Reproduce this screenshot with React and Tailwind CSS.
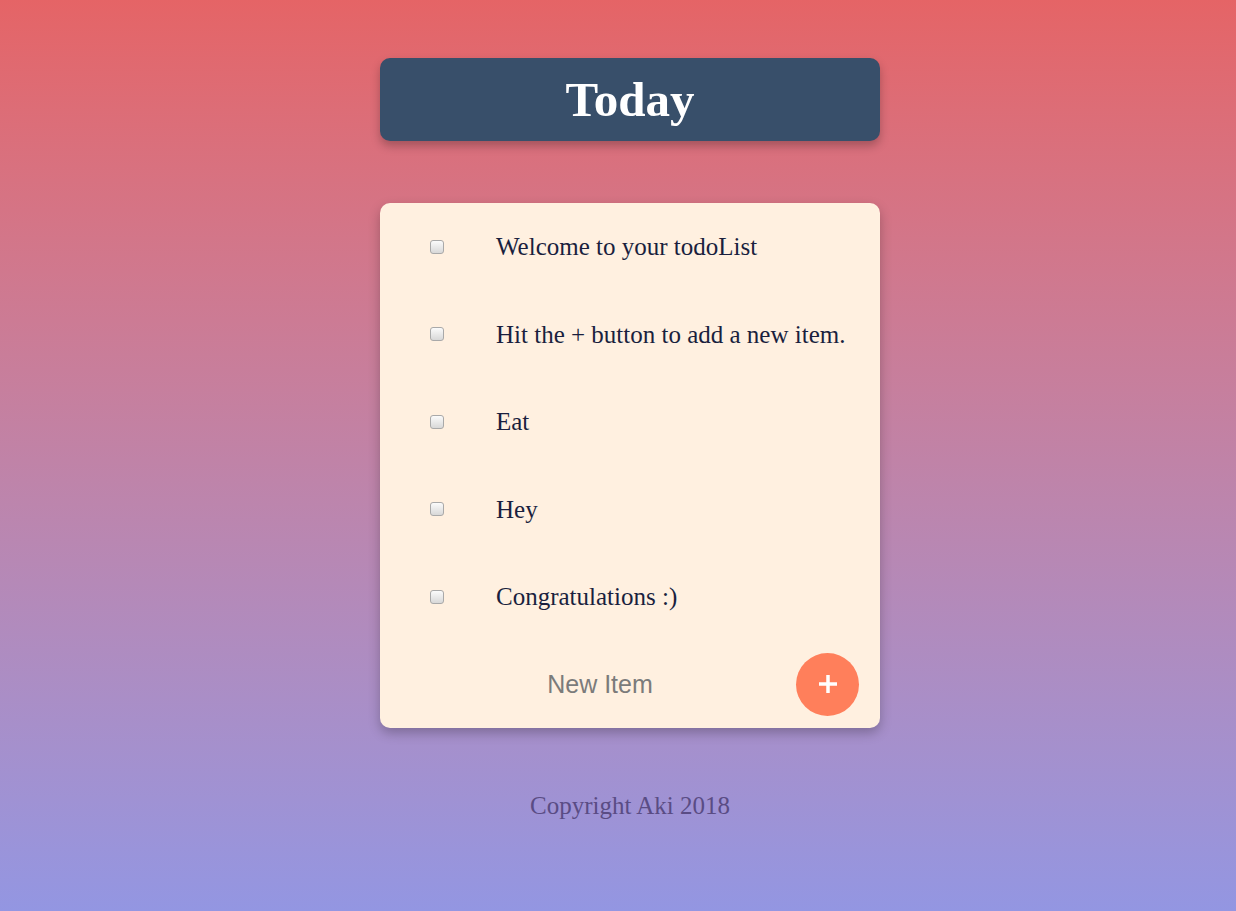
import { useState } from 'react'

const initialItems = [
  'Welcome to your todoList',
  'Hit the + button to add a new item.',
  'Eat',
  'Hey',
  'Congratulations :)',
]

export default function App() {
  const [items, setItems] = useState(initialItems)
  const [checked, setChecked] = useState([])
  const [text, setText] = useState('')

  const toggle = (i) => {
    setChecked((c) => (c.includes(i) ? c.filter((x) => x !== i) : [...c, i]))
  }

  const addItem = (e) => {
    e.preventDefault()
    if (!text.trim()) return
    setItems((list) => [...list, text.trim()])
    setText('')
  }

  return (
    <main
      className="min-h-screen bg-gradient-to-b from-[#e56466] to-[#9396e2] pt-[58px] pl-[24px] flex flex-col items-center"
      style={{ fontFamily: '"Liberation Serif", "Times New Roman", serif' }}
    >
      <div className="w-[500px] h-[83px] rounded-[10px] bg-[#384f6a] shadow-[0_5px_10px_rgba(0,0,0,0.25)] flex items-center justify-center">
        <h1 className="text-[49px] font-bold text-white leading-none">Today</h1>
      </div>

      <div className="mt-[62px] w-[500px] rounded-[10px] bg-[#fff0e0] shadow-[0_5px_12px_rgba(0,0,0,0.25)]">
        {items.map((item, i) => (
          <div key={i} className="h-[87.5px] flex items-center">
            <input
              type="checkbox"
              checked={checked.includes(i)}
              onChange={() => toggle(i)}
              className="ml-[50px] w-[14px] h-[14px] appearance-none rounded-[3px] border border-[#a9a9a9] bg-gradient-to-b from-[#fbfbfb] to-[#d8d8d8] checked:bg-[#c8c8c8]"
            />
            <p className="ml-[52px] text-[25px] text-[#1a1f3e]">{item}</p>
          </div>
        ))}

        <form onSubmit={addItem} className="h-[87.5px] flex items-center">
          <input
            type="text"
            value={text}
            onChange={(e) => setText(e.target.value)}
            placeholder="New Item"
            className="w-[416px] pl-[24px] bg-transparent text-center text-[25px] text-[#333] placeholder:text-[#7b7b7b] outline-none"
            style={{ fontFamily: '"Liberation Sans", Arial, sans-serif' }}
          />
          <button
            type="submit"
            className="w-[63px] h-[63px] rounded-full bg-[#ff7f5b] text-white flex items-center justify-center"
          >
            <svg width="22" height="22" viewBox="0 0 22 22">
              <path d="M11 2v18M2 11h18" stroke="white" strokeWidth="3.5" />
            </svg>
          </button>
        </form>
      </div>

      <p className="mt-[59px] text-[25px] text-[#5a4c84]">Copyright Aki 2018</p>
    </main>
  )
}
